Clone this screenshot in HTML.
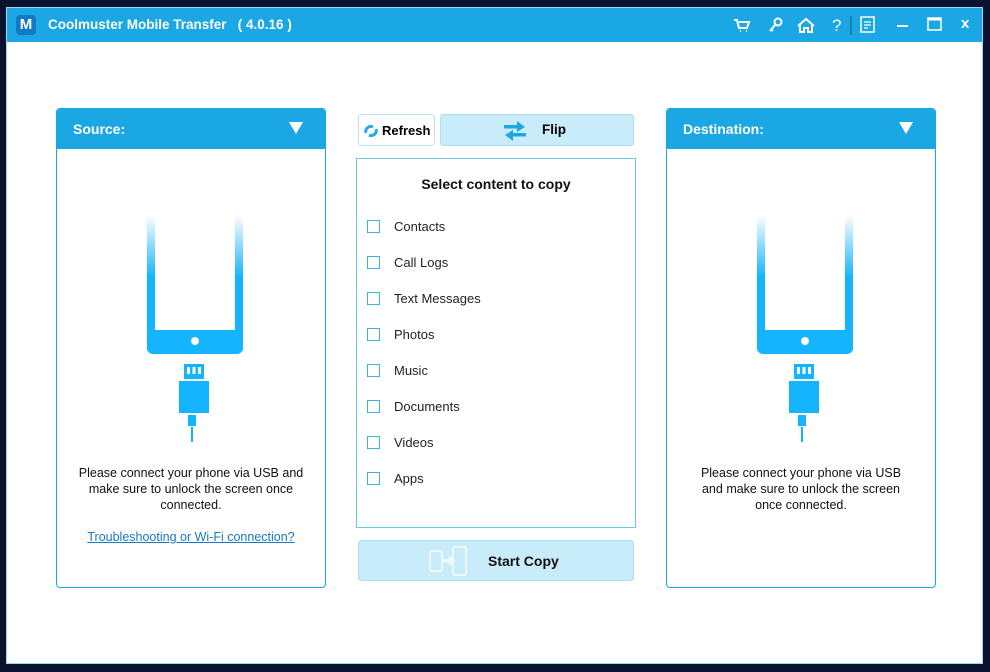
<!DOCTYPE html><html><head><style>
*{margin:0;padding:0;box-sizing:border-box}
body{width:990px;height:672px;background:#0b1230;font-family:"Liberation Sans",Arial,sans-serif;position:relative;overflow:hidden}
.win{position:absolute;left:6px;top:7px;width:977px;height:657px;background:#fff;border:1px solid #9fd3ee}
.title{position:absolute;left:0;top:0;width:100%;height:34px;background:#1aa7e4;color:#fff}
.abs{position:absolute}
.panel{position:absolute;top:100px;width:270px;height:480px;border:1px solid #1aa7e4;border-radius:4px;overflow:hidden}
.ph{height:40px;background:#1aa7e4;color:#fff;font-weight:bold;font-size:14px;padding:12px 0 0 16px;position:relative}
.tri{position:absolute;right:22px;top:13px;width:0;height:0;border-left:7px solid transparent;border-right:7px solid transparent;border-top:12px solid #fff}
.msg{position:absolute;width:100%;text-align:center;font-size:12.5px;line-height:16px;color:#111}
.item{position:absolute;left:10px;font-size:13px;color:#222}
.item i{position:absolute;left:0;top:1px;width:13px;height:13px;border:1px solid #3fb3dc}
.item span{position:absolute;left:27px;top:0;white-space:nowrap}
</style></head><body>
<div class="win">
<div class="title">
 <div class="abs" style="left:9px;top:7px;width:20px;height:20px;background:#1479c4;border-radius:4px;color:#fff;font-weight:bold;font-size:15px;text-align:center;line-height:20px">M</div>
 <div class="abs" style="left:41px;top:9px;font-size:13.5px;font-weight:bold">Coolmuster Mobile Transfer &nbsp;&nbsp;( 4.0.16 )</div>
 <svg class="abs" style="left:725px;top:7px" width="250" height="20" fill="none" stroke="#fff" stroke-width="2">
  <path d="M2 5h3l2 8h8l2-6H7M8 16h1M14 16h1"/>
  <circle cx="46" cy="7" r="3.5"/><path d="M43 10l-5 6M39 14l2 2"/>
  <path d="M66 11l8-7 8 7M68 10v7h4v-4h4v4h4v-7"/>
  <text x="100" y="16" fill="#fff" stroke="none" font-size="17" font-family="Liberation Sans">?</text>
  <path d="M119 1v19" stroke-width="1" stroke="#0a5e88"/>
  <rect x="129" y="2" width="13" height="15" stroke-width="1.5"/><path d="M132 7h7M132 10h7M132 13h4" stroke-width="1.3"/>
  <path d="M165 11h11"/>
  <rect x="196" y="3" width="13" height="12" stroke-width="1.5"/><path d="M196 4h13" stroke-width="3"/>
 </svg>
 <div class="abs" style="left:954px;top:7px;font-size:15px;font-weight:bold">x</div>
</div>

<div class="panel" style="left:49px">
 <div class="ph">Source:<div class="tri"></div></div>
 <svg class="abs" style="left:90px;top:106px" width="96" height="230">
  <defs><linearGradient id="g" x1="0" y1="0" x2="0" y2="1"><stop offset="0" stop-color="#14b4ff" stop-opacity="0"/><stop offset="0.45" stop-color="#14b4ff"/></linearGradient></defs>
  <path d="M0 0h8v115h80V0h8v133a6 6 0 0 1-6 6H6a6 6 0 0 1-6-6z" fill="url(#g)"/>
  <circle cx="48" cy="126" r="4" fill="#fff"/>
  <rect x="37" y="149" width="20" height="15" fill="#14b4ff"/><rect x="40" y="152" width="3" height="7" fill="#fff"/><rect x="45.5" y="152" width="3" height="7" fill="#fff"/><rect x="51" y="152" width="3" height="7" fill="#fff"/>
  <rect x="32" y="166" width="30" height="32" fill="#14b4ff"/>
  <rect x="41" y="200" width="8" height="11" fill="#14b4ff"/><rect x="44" y="212" width="2" height="15" fill="#14b4ff"/>
 </svg>
 <div class="msg" style="top:356px">Please connect your phone via USB and<br>make sure to unlock the screen once<br>connected.</div>
 <div class="msg" style="top:420px;color:#1679c8;text-decoration:underline">Troubleshooting or Wi-Fi connection?</div>
</div>

<div class="panel" style="left:659px">
 <div class="ph">Destination:<div class="tri"></div></div>
 <svg class="abs" style="left:90px;top:106px" width="96" height="230">
  <path d="M0 0h8v115h80V0h8v133a6 6 0 0 1-6 6H6a6 6 0 0 1-6-6z" fill="url(#g)"/>
  <circle cx="48" cy="126" r="4" fill="#fff"/>
  <rect x="37" y="149" width="20" height="15" fill="#14b4ff"/><rect x="40" y="152" width="3" height="7" fill="#fff"/><rect x="45.5" y="152" width="3" height="7" fill="#fff"/><rect x="51" y="152" width="3" height="7" fill="#fff"/>
  <rect x="32" y="166" width="30" height="32" fill="#14b4ff"/>
  <rect x="41" y="200" width="8" height="11" fill="#14b4ff"/><rect x="44" y="212" width="2" height="15" fill="#14b4ff"/>
 </svg>
 <div class="msg" style="top:356px">Please connect your phone via USB<br>and make sure to unlock the screen<br>once connected.</div>
</div>

<div class="abs" style="left:351px;top:106px;width:77px;height:32px;border:1px solid #bfe3f3;border-radius:3px;font-size:13px;font-weight:bold;padding:8px 0 0 23px">Refresh
 <svg class="abs" style="left:5px;top:9px" width="14" height="14" stroke="#29a9e5" stroke-width="3" fill="none"><path d="M2 9a5 5 0 0 1 7-6M12 5a5 5 0 0 1-7 6"/></svg></div>
<div class="abs" style="left:433px;top:106px;width:194px;height:32px;background:#c9ecfb;border:1px solid #b0dff3;border-radius:3px;font-size:13.5px;font-weight:bold;padding:7px 0 0 101px">Flip
 <svg class="abs" style="left:62px;top:6px" width="24" height="20" fill="#1aa7e4"><rect x="1" y="4" width="15" height="3.5"/><polygon points="14,0 22,6 14,11"/><rect x="8" y="12" width="15" height="3.5"/><polygon points="10,9 2,14 10,20"/></svg></div>

<div class="abs" style="left:349px;top:150px;width:280px;height:370px;border:1px solid #6ccbeb">
 <div class="abs" style="left:0;top:17px;width:100%;text-align:center;font-weight:bold;font-size:14px;color:#111">Select content to copy</div>
 <div class="item" style="top:60px"><i></i><span>Contacts</span></div>
 <div class="item" style="top:96px"><i></i><span>Call Logs</span></div>
 <div class="item" style="top:132px"><i></i><span>Text Messages</span></div>
 <div class="item" style="top:168px"><i></i><span>Photos</span></div>
 <div class="item" style="top:204px"><i></i><span>Music</span></div>
 <div class="item" style="top:240px"><i></i><span>Documents</span></div>
 <div class="item" style="top:276px"><i></i><span>Videos</span></div>
 <div class="item" style="top:312px"><i></i><span>Apps</span></div>
</div>

<div class="abs" style="left:351px;top:532px;width:276px;height:41px;background:#c9ecfb;border:1px solid #b0dff3;border-radius:3px;font-size:14px;font-weight:bold;padding:12px 0 0 129px;color:#111">Start Copy
 <svg class="abs" style="left:70px;top:5px" width="40" height="30" fill="none" stroke="#eef9ff" stroke-width="2"><rect x="1" y="5" width="12" height="20" rx="2"/><rect x="24" y="1" width="13" height="28" rx="2"/><path d="M14 15h10M20 11l4 4-4 4" stroke-width="3"/></svg></div>
</div>
</body></html>
